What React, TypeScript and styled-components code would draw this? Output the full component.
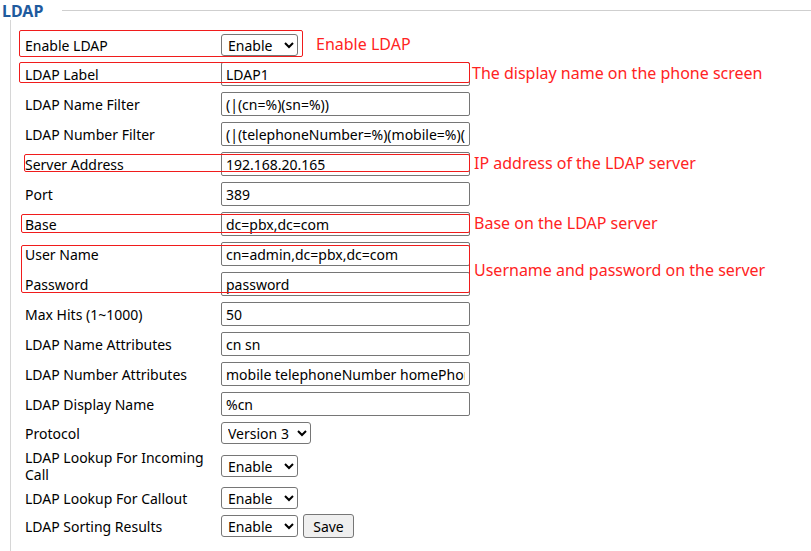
import styled, { createGlobalStyle } from 'styled-components';

const GlobalStyle = createGlobalStyle`
  body {
    margin: 0;
    background: #fff;
    font-family: "Noto Sans", "Liberation Sans", sans-serif;
    color: #000;
  }
`;

type Field = {
  label: string;
  kind: 'input' | 'select';
  value: string;
  options?: string[];
  width?: number;
  tall?: boolean;
  save?: boolean;
};

const fields: Field[] = [
  { label: 'Enable LDAP', kind: 'select', value: 'Enable', options: ['Enable', 'Disable'], width: 77 },
  { label: 'LDAP Label', kind: 'input', value: 'LDAP1' },
  { label: 'LDAP Name Filter', kind: 'input', value: '(|(cn=%)(sn=%))' },
  { label: 'LDAP Number Filter', kind: 'input', value: '(|(telephoneNumber=%)(mobile=%)(other=%))' },
  { label: 'Server Address', kind: 'input', value: '192.168.20.165' },
  { label: 'Port', kind: 'input', value: '389' },
  { label: 'Base', kind: 'input', value: 'dc=pbx,dc=com' },
  { label: 'User Name', kind: 'input', value: 'cn=admin,dc=pbx,dc=com' },
  { label: 'Password', kind: 'input', value: 'password' },
  { label: 'Max Hits (1~1000)', kind: 'input', value: '50' },
  { label: 'LDAP Name Attributes', kind: 'input', value: 'cn sn' },
  { label: 'LDAP Number Attributes', kind: 'input', value: 'mobile telephoneNumber homePhone' },
  { label: 'LDAP Display Name', kind: 'input', value: '%cn' },
  { label: 'Protocol', kind: 'select', value: 'Version 3', options: ['Version 2', 'Version 3'], width: 90 },
  { label: 'LDAP Lookup For Incoming Call', kind: 'select', value: 'Enable', options: ['Enable', 'Disable'], width: 77, tall: true },
  { label: 'LDAP Lookup For Callout', kind: 'select', value: 'Enable', options: ['Enable', 'Disable'], width: 77 },
  { label: 'LDAP Sorting Results', kind: 'select', value: 'Enable', options: ['Enable', 'Disable'], width: 77, save: true },
];

// red marks drawn over the form (page coordinates)
const marks = [
  { left: 19, top: 30, width: 284, height: 27 },
  { left: 19, top: 62, width: 451, height: 21 },
  { left: 24, top: 154, width: 446, height: 18 },
  { left: 21, top: 214, width: 449, height: 19 },
  { left: 21, top: 245, width: 449, height: 48 },
];

const notes = [
  { left: 316, top: 33, text: 'Enable LDAP' },
  { left: 472, top: 62, text: 'The display name on the phone screen' },
  { left: 474, top: 152, text: 'IP address of the LDAP server' },
  { left: 474, top: 212, text: 'Base on the LDAP server' },
  { left: 474, top: 259, text: 'Username and password on the server' },
];

const App = () => {
  return (
    <Page>
      <GlobalStyle />
      <Legend>
        <Title>LDAP</Title>
        <Rule />
      </Legend>
      <Body>
        {fields.map((f) => (
          <Row key={f.label} $size={f.tall ? 'tall' : f.kind}>
            <Label>{f.label}</Label>
            <Controls>
              {f.kind === 'input' ? (
                <TextInput defaultValue={f.value} />
              ) : (
                <Select defaultValue={f.value} $width={f.width ?? 77}>
                  {f.options?.map((o) => (
                    <option key={o}>{o}</option>
                  ))}
                </Select>
              )}
              {f.save && <SaveButton>Save</SaveButton>}
            </Controls>
          </Row>
        ))}
      </Body>
      {marks.map((m, i) => (
        <Mark key={i} style={{ left: m.left, top: m.top, width: m.width, height: m.height }} />
      ))}
      {notes.map((n) => (
        <Note key={n.text} style={{ left: n.left, top: n.top }}>
          {n.text}
        </Note>
      ))}
    </Page>
  );
};

const Page = styled.div`
  position: relative;
  width: 811px;
  height: 551px;
  overflow: hidden;
`;

const Legend = styled.div`
  display: flex;
  align-items: center;
  height: 20px;
`;

const Title = styled.div`
  font-size: 16px;
  font-weight: bold;
  color: #1f5b9e;
  padding-left: 2px;
  line-height: 20px;
  margin-top: 1px;
`;

const Rule = styled.div`
  flex: 1;
  height: 1px;
  background: #cfcfcf;
  margin-left: 19px;
`;

const Body = styled.div`
  margin-left: 10px;
  border-left: 1px solid #d6d6d6;
  padding: 11px 0 20px 14px;
`;

const rowHeights = { input: 30, select: 28, tall: 37 };

const Row = styled.div<{ $size: 'input' | 'select' | 'tall' }>`
  display: grid;
  grid-template-columns: 196px auto;
  align-items: center;
  height: ${(p) => rowHeights[p.$size]}px;
`;

const Label = styled.div`
  font-size: 14px;
  line-height: 17px;
  padding-right: 6px;
`;

const Controls = styled.div`
  display: flex;
  align-items: center;
  gap: 5px;
`;

const TextInput = styled.input`
  box-sizing: border-box;
  width: 249px;
  height: 24px;
  border: 1px solid #767676;
  border-radius: 2px;
  padding: 0 4px;
  font-family: "Noto Sans", "Liberation Sans", sans-serif;
  font-size: 14px;
  color: #000;
  outline: none;
`;

const Select = styled.select<{ $width: number }>`
  box-sizing: border-box;
  width: ${(p) => p.$width}px;
  height: 22px;
  border: 1px solid #767676;
  border-radius: 3px;
  padding: 0 0 0 2px;
  background: #fff;
  font-family: "Noto Sans", "Liberation Sans", sans-serif;
  font-size: 14px;
  color: #000;
`;

const SaveButton = styled.button`
  box-sizing: border-box;
  width: 51px;
  height: 24px;
  border: 1px solid #767676;
  border-radius: 3px;
  background: #efefef;
  font-family: "Noto Sans", "Liberation Sans", sans-serif;
  font-size: 14px;
  color: #000;
  padding: 0;
`;

const Mark = styled.div`
  position: absolute;
  box-sizing: border-box;
  border: 1px solid #f01c1c;
  border-radius: 2px;
  pointer-events: none;
`;

const Note = styled.div`
  position: absolute;
  font-size: 16px;
  line-height: 22px;
  color: #ff2323;
  white-space: nowrap;
`;

export default App;
